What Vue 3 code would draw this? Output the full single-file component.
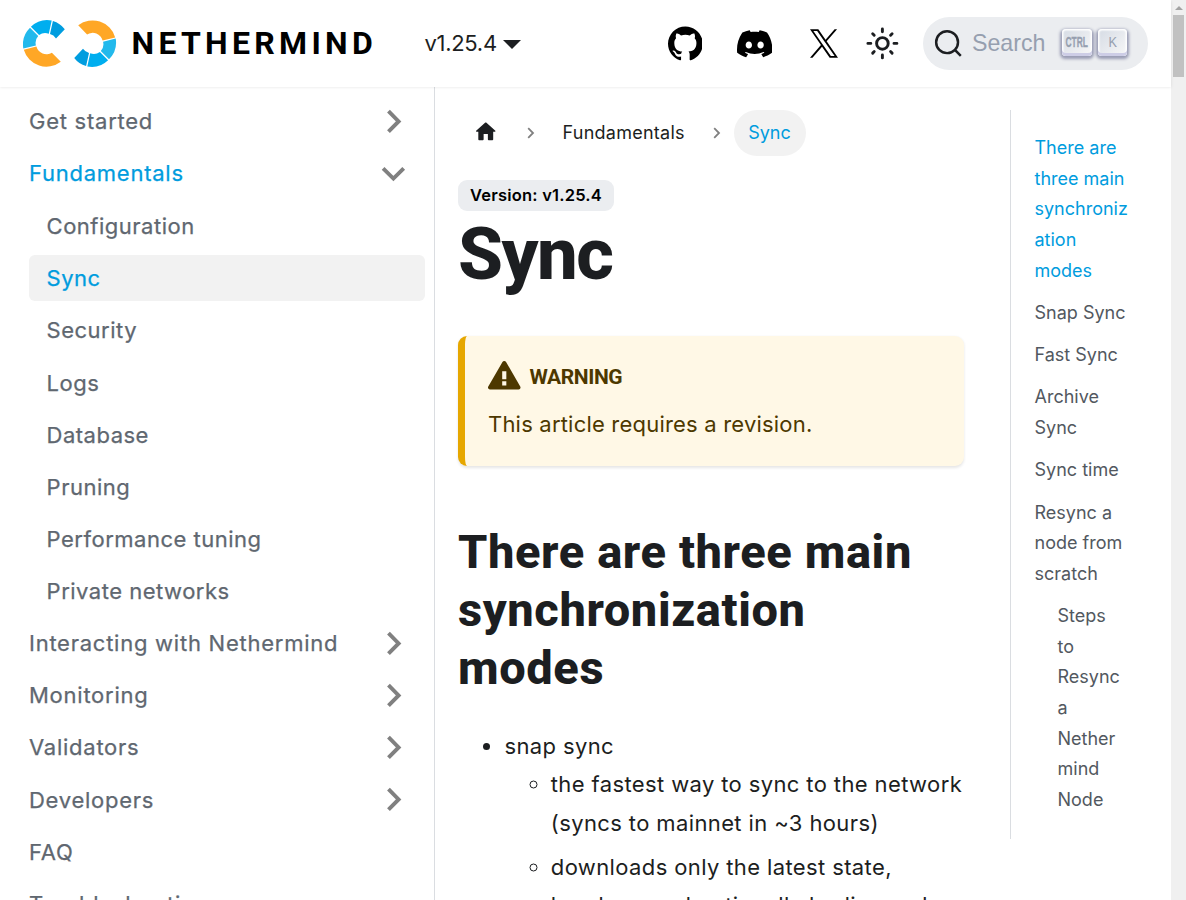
<script setup>
const fundamentals = [
  'Configuration', 'Sync', 'Security', 'Logs', 'Database',
  'Pruning', 'Performance tuning', 'Private networks',
]
const menu = [
  { label: 'Get started', chevron: true },
  { label: 'Fundamentals', chevron: true, open: true, children: fundamentals },
  { label: 'Interacting with Nethermind', chevron: true },
  { label: 'Monitoring', chevron: true },
  { label: 'Validators', chevron: true },
  { label: 'Developers', chevron: true },
  { label: 'FAQ' },
  { label: 'Troubleshooting' },
]
const toc = [
  { lines: ['There are', 'three main', 'synchroniz', 'ation', 'modes'], active: true },
  { lines: ['Snap Sync'] },
  { lines: ['Fast Sync'] },
  { lines: ['Archive', 'Sync'] },
  { lines: ['Sync time'] },
  { lines: ['Resync a', 'node from', 'scratch'] },
  { lines: ['Steps', 'to', 'Resync', 'a', 'Nether', 'mind', 'Node'], nested: true },
]
</script>

<template>
  <div class="page">
    <div class="site">
      <header class="navbar">
        <svg class="logo" width="94" height="49" viewBox="23 19 94 49">
          <g id="mark">
            <path fill="#009ddf" d="M52.9 21A23.6 23.6 0 0 1 64.8 29.2L56 38.4A11 11 0 0 0 50 34.1Z" />
            <path fill="#00aeef" d="M30.9 26.8A23.6 23.6 0 0 1 51.7 20.5L48.8 33.8A10.4 10.4 0 0 0 39.1 35.1Z" />
            <path fill="#22b9ec" d="M23.3 48.5A23.6 23.6 0 0 1 30 27.8L38.2 36A10.4 10.4 0 0 0 35.9 45.4Z" />
            <path fill="#ffa726" d="M60.8 61.8A23.6 23.6 0 0 1 23.8 49.7L36.4 46.6A10.4 10.4 0 0 0 51.9 52.7Z" />
          </g>
          <use href="#mark" transform="rotate(180 69.5 43.55)" />
        </svg>
        <span class="brand">NETHERMIND</span>
        <span class="version">v1.25.4</span>
        <i class="caret"></i>
        <nav class="icons">
          <svg class="github" viewBox="0 0 24 24"><path d="M12 .297c-6.63 0-12 5.373-12 12 0 5.303 3.438 9.8 8.205 11.385.6.113.82-.258.82-.577 0-.285-.01-1.04-.015-2.04-3.338.724-4.042-1.61-4.042-1.61C4.422 18.07 3.633 17.7 3.633 17.7c-1.087-.744.084-.729.084-.729 1.205.084 1.838 1.236 1.838 1.236 1.07 1.835 2.809 1.305 3.495.998.108-.776.417-1.305.76-1.605-2.665-.3-5.466-1.332-5.466-5.93 0-1.31.465-2.38 1.235-3.22-.135-.303-.54-1.523.105-3.176 0 0 1.005-.322 3.3 1.23.96-.267 1.98-.399 3-.405 1.02.006 2.04.138 3 .405 2.28-1.552 3.285-1.23 3.285-1.23.645 1.653.24 2.873.12 3.176.765.84 1.23 1.91 1.23 3.22 0 4.61-2.805 5.625-5.475 5.92.42.36.81 1.096.81 2.22 0 1.606-.015 2.896-.015 3.286 0 .315.21.69.825.57C20.565 22.092 24 17.592 24 12.297c0-6.627-5.373-12-12-12" /></svg>
          <svg class="discord" viewBox="0 0 24 24"><path d="M20.317 4.37a19.79 19.79 0 00-4.885-1.515.074.074 0 00-.079.037c-.211.375-.445.865-.608 1.25-1.845-.276-3.68-.276-5.487 0-.164-.394-.406-.875-.618-1.25a.077.077 0 00-.078-.037 19.736 19.736 0 00-4.885 1.515.07.07 0 00-.032.028C.533 9.046-.319 13.58.099 18.058a.082.082 0 00.031.056c2.053 1.508 4.042 2.423 5.993 3.03a.078.078 0 00.084-.028c.462-.63.873-1.295 1.226-1.994a.076.076 0 00-.041-.106 13.1 13.1 0 01-1.873-.892.077.077 0 01-.007-.128c.126-.094.251-.192.372-.291a.074.074 0 01.077-.011c3.928 1.794 8.18 1.794 12.062 0a.074.074 0 01.078.01c.12.099.246.198.373.292a.077.077 0 01-.007.128 12.3 12.3 0 01-1.873.891.077.077 0 00-.04.107c.36.698.771 1.363 1.225 1.993a.076.076 0 00.084.029c1.961-.607 3.95-1.522 6.002-3.03a.077.077 0 00.032-.055c.5-5.177-.838-9.674-3.549-13.66a.061.061 0 00-.031-.029zM8.02 15.331c-1.183 0-2.157-1.086-2.157-2.419s.956-2.419 2.157-2.419c1.211 0 2.176 1.095 2.157 2.419 0 1.333-.956 2.419-2.157 2.419zm7.975 0c-1.183 0-2.157-1.086-2.157-2.419s.955-2.419 2.157-2.419c1.211 0 2.176 1.095 2.157 2.419 0 1.333-.946 2.419-2.157 2.419z" /></svg>
          <svg class="x" viewBox="0 0 1200 1227"><path d="M714.163 519.284L1160.89 0H1055.03L667.137 450.887L357.328 0H0L468.492 681.821L0 1226.37H105.866L515.491 750.218L842.672 1226.37H1200L714.137 519.284ZM569.165 687.828L521.697 619.934L144.011 79.694H306.615L611.412 515.685L658.88 583.579L1055.08 1150.3H892.476L569.165 687.854Z" /></svg>
          <svg class="sun" viewBox="0 0 24 24"><circle cx="12" cy="12" r="4" /><path d="M2 12h2M20 12h2M12 2v2M12 20v2M5.3 5.3l1.05 1.05M17.65 17.65l1.05 1.05M18.7 5.3l-1.05 1.05M6.35 17.65L5.3 18.7" /></svg>
        </nav>
        <div class="search">
          <svg class="lens" viewBox="0 0 20 20"><path d="M14.386 14.386l4.088 4.088-4.088-4.088A7.533 7.533 0 1 1 3.733 3.733a7.533 7.533 0 0 1 10.653 10.653z" /></svg>
          <span class="placeholder">Search</span>
          <kbd><svg width="30" height="25"><text class="bold" x="3.5" y="17.5" font-size="15.5" font-weight="700" textLength="22.5" lengthAdjust="spacingAndGlyphs">CTRL</text></svg></kbd>
          <kbd><svg width="30" height="25"><text x="10.5" y="17.5" font-size="15.5" textLength="8.5" lengthAdjust="spacingAndGlyphs">K</text></svg></kbd>
        </div>
      </header>

      <div class="body">
        <aside class="sidebar">
          <template v-for="item in menu" :key="item.label">
            <div class="item" :class="{ current: item.open }">
              <span>{{ item.label }}</span>
              <svg v-if="item.chevron" class="chevron" :class="{ down: item.open }" viewBox="0 0 24 24"><path d="M8.6 4.9L15.6 12l-7 7.1" /></svg>
            </div>
            <div v-for="child in item.children" :key="child" class="item child" :class="{ active: child === 'Sync' }">
              <span>{{ child }}</span>
            </div>
          </template>
        </aside>

        <main class="content">
          <nav class="crumbs">
            <svg class="home" viewBox="0 0 24 24"><path d="M10 19v-5h4v5c0 .55.45 1 1 1h3c.55 0 1-.45 1-1v-7h1.7c.46 0 .68-.57.33-.87L12.67 3.6c-.38-.34-.96-.34-1.34 0l-8.36 7.53c-.34.3-.13.87.33.87H5v7c0 .55.45 1 1 1h3c.55 0 1-.45 1-1z" /></svg>
            <svg class="sep" viewBox="0 0 8 12"><path d="M1.2 1.2L6 6l-4.8 4.8" /></svg>
            <span class="crumb">Fundamentals</span>
            <svg class="sep" viewBox="0 0 8 12"><path d="M1.2 1.2L6 6l-4.8 4.8" /></svg>
            <span class="crumb here">Sync</span>
          </nav>
          <span class="badge">Version: v1.25.4</span>
          <h1>Sync</h1>
          <div class="warning">
            <div class="warning-title">
              <svg viewBox="0 0 16 16"><path fill-rule="evenodd" d="M8.893 1.5c-.183-.31-.52-.5-.887-.5s-.703.19-.886.5L.138 13.499a.98.98 0 0 0 0 1.001c.193.31.53.501.886.501h13.964c.367 0 .704-.19.877-.5a1.03 1.03 0 0 0 .01-1.002L8.893 1.5zm.133 11.497H6.987v-2.003h2.039v2.003zm0-3.004H6.987V5.987h2.039v4.006z" /></svg>
              <span>WARNING</span>
            </div>
            <p>This article requires a revision.</p>
          </div>
          <h2>There are three main<br>synchronization<br>modes</h2>
          <ul>
            <li>snap sync
              <ul>
                <li>the fastest way to sync to the network<br>(syncs to mainnet in ~3 hours)</li>
                <li>downloads only the latest state,<br>headers, and optionally bodies and</li>
              </ul>
            </li>
          </ul>
        </main>

        <aside class="toc">
          <div v-for="(entry, i) in toc" :key="i" class="entry" :class="{ active: entry.active, nested: entry.nested }">
            <div v-for="line in entry.lines" :key="line">{{ line }}</div>
          </div>
        </aside>
      </div>
    </div>
    <div class="scrollbar"><i class="up"></i><i class="thumb"></i></div>
  </div>
</template>

<style>
html, body { overflow: hidden; background: #fff; }
</style>

<style scoped>
* { box-sizing: border-box; }
.page { display: flex; width: 1186px; height: 900px; overflow: hidden; font-family: Inter, "Noto Sans", sans-serif; font-size: 22px; color: #1c1e21; }
.site { width: 1171px; height: 900px; display: flex; flex-direction: column; }
.navbar { position: relative; flex: none; height: 87px; display: flex; align-items: center; padding-left: 22.5px; box-shadow: 0 1.45px 2.9px rgba(0, 0, 0, .1); background: #fff; }
.logo { flex: none; }
.brand { width: 286px; margin-left: 15px; padding-bottom: 1px; font: 700 32px/40px Roboto, sans-serif; letter-spacing: 4.3px; color: #000; white-space: nowrap; }
.version { width: 73px; margin-left: 7px; padding-bottom: 2px; letter-spacing: -.3px; white-space: nowrap; }
.caret { margin-left: 5px; margin-top: 2px; border: 9.3px solid transparent; border-top-color: #1c1e21; border-bottom: 0; }
.icons { display: flex; align-items: center; margin-left: 147px; }
.icons svg { flex: none; }
.github { width: 34.8px; height: 34.8px; }
.discord { width: 35.4px; height: 35.4px; margin-left: 34.6px; }
.x { width: 28px; height: 29px; margin-left: 37.4px; }
.sun { width: 34.8px; height: 34.8px; margin-left: 27px; fill: none; stroke: #1c1e21; stroke-width: 2; stroke-linecap: round; }
.search { display: flex; align-items: center; width: 225px; height: 53px; margin-left: 23.5px; padding-left: 11px; border-radius: 27px; background: #ebedf0; }
.lens { flex: none; width: 29px; height: 29px; fill: none; stroke: #1c1e21; stroke-width: 1.7; }
.placeholder { flex: none; width: 90.5px; margin-left: 9px; padding-bottom: 2px; font: 23.2px/30px "Liberation Sans", sans-serif; color: #969faf; }
kbd { flex: none; width: 29.5px; height: 27px; margin: -3px 6px 0 0; border-radius: 4px; background: linear-gradient(-225deg, #d5dbe4, #f8f8f8); box-shadow: inset 0 -3px #cdcde6, inset 0 0 1.5px 1.5px #fff, 0 1.5px 3px 1.5px rgba(30, 35, 90, .4); }
kbd svg { display: block; overflow: visible; }
kbd text { font-family: "Liberation Sans", sans-serif; fill: #969faf; }
kbd .bold { stroke: #969faf; stroke-width: .3; }
.body { display: flex; height: 813px; overflow: hidden; }
.sidebar { flex: none; width: 435px; height: 100%; padding: 11.4px 9px 0 11.4px; border-right: 1px solid #dadde1; overflow: hidden; }
.item { display: flex; align-items: center; justify-content: space-between; height: 46.4px; margin-bottom: 5.8px; padding: 0 14px 1px 17.6px; border-radius: 5.8px; font-weight: 400; color: #606770; -webkit-text-stroke: .25px; white-space: nowrap; letter-spacing: .75px; }
.child { margin-left: 17.6px; padding-bottom: 0; letter-spacing: .5px; }
.active { color: #009cde; }
.child.active { background: #f2f2f2; }
.current { color: #009cde; }
.chevron { width: 34.8px; height: 34.8px; fill: none; stroke: #808080; stroke-width: 2.7; }
.chevron.down { transform: rotate(90deg); }
.content { flex: none; width: 530px; padding: 23px 0 0 23px; }
.crumbs { display: flex; align-items: center; height: 46px; padding-bottom: 1px; font-size: 18px; letter-spacing: .25px; }
.home { width: 25.5px; height: 25.5px; margin: -1px 0 0 15px; fill: #1c1e21; }
.sep { width: 8px; height: 12px; margin-left: 28.5px; fill: none; stroke: #808080; stroke-width: 1.8; }
.crumb { width: 122px; margin-left: 27.5px; white-space: nowrap; }
.crumb.here { width: 72px; height: 46px; margin: 1px 0 0 12.5px; border-radius: 23px; line-height: 45px; text-align: center; background: #f2f2f2; color: #009cde; letter-spacing: 0; }
.badge { display: block; width: 156px; height: 31px; margin-top: 24px; border-radius: 9px; background: #ebedf0; color: #000; font-size: 16.5px; font-weight: 600; line-height: 31px; letter-spacing: .2px; text-align: center; white-space: nowrap; }
h1, h2 { margin: 0; font-family: Roboto, sans-serif; font-weight: 800; white-space: nowrap; }
h1 { height: 87px; font-size: 72.5px; line-height: 87px; letter-spacing: -1.5px; }
.warning { width: 506px; height: 130px; margin-top: 38px; padding: 23px 0 0 23px; border-left: 7.25px solid #e6a700; border-radius: 9px; background: #fff8e6; box-shadow: 0 1.45px 2.9px rgba(0, 0, 0, .1); color: #4d3800; }
.warning-title { display: flex; align-items: center; height: 33px; font: 700 21px/33px Roboto, sans-serif; letter-spacing: -.4px; }
.warning-title span { padding-top: 4px; }
.warning-title svg { width: 32.5px; height: 32.5px; margin-right: 9px; fill: #4d3800; }
.warning p { margin: 13px 0 0; line-height: 38.3px; letter-spacing: .2px; white-space: nowrap; }
h2 { margin-top: 57px; font-size: 47px; line-height: 58px; letter-spacing: .6px; }
ul { margin: 0; padding-left: 46.4px; line-height: 38.3px; letter-spacing: .38px; white-space: nowrap; }
h2 + ul { margin-top: 30px; }
li + li { margin-top: 5.8px; }
.toc { flex: none; width: 120px; height: 729px; margin: 23px 0 0 45px; padding: 23px 0 0 23.5px; border-left: 1px solid #dadde1; font-size: 18px; line-height: 30.65px; color: #525860; }
.entry { margin-bottom: 11.6px; white-space: nowrap; }
.entry.active { color: #009cde; }
.nested { padding-left: 23px; }
.scrollbar { display: flex; flex-direction: column; align-items: center; width: 15px; height: 900px; background: #f0f0f0; }
.up { margin-top: 6px; border: 4px solid transparent; border-bottom-color: #a3a3a3; border-top: 0; }
.thumb { width: 11px; height: 62px; margin-top: 5px; background: #c1c1c1; }
</style>
